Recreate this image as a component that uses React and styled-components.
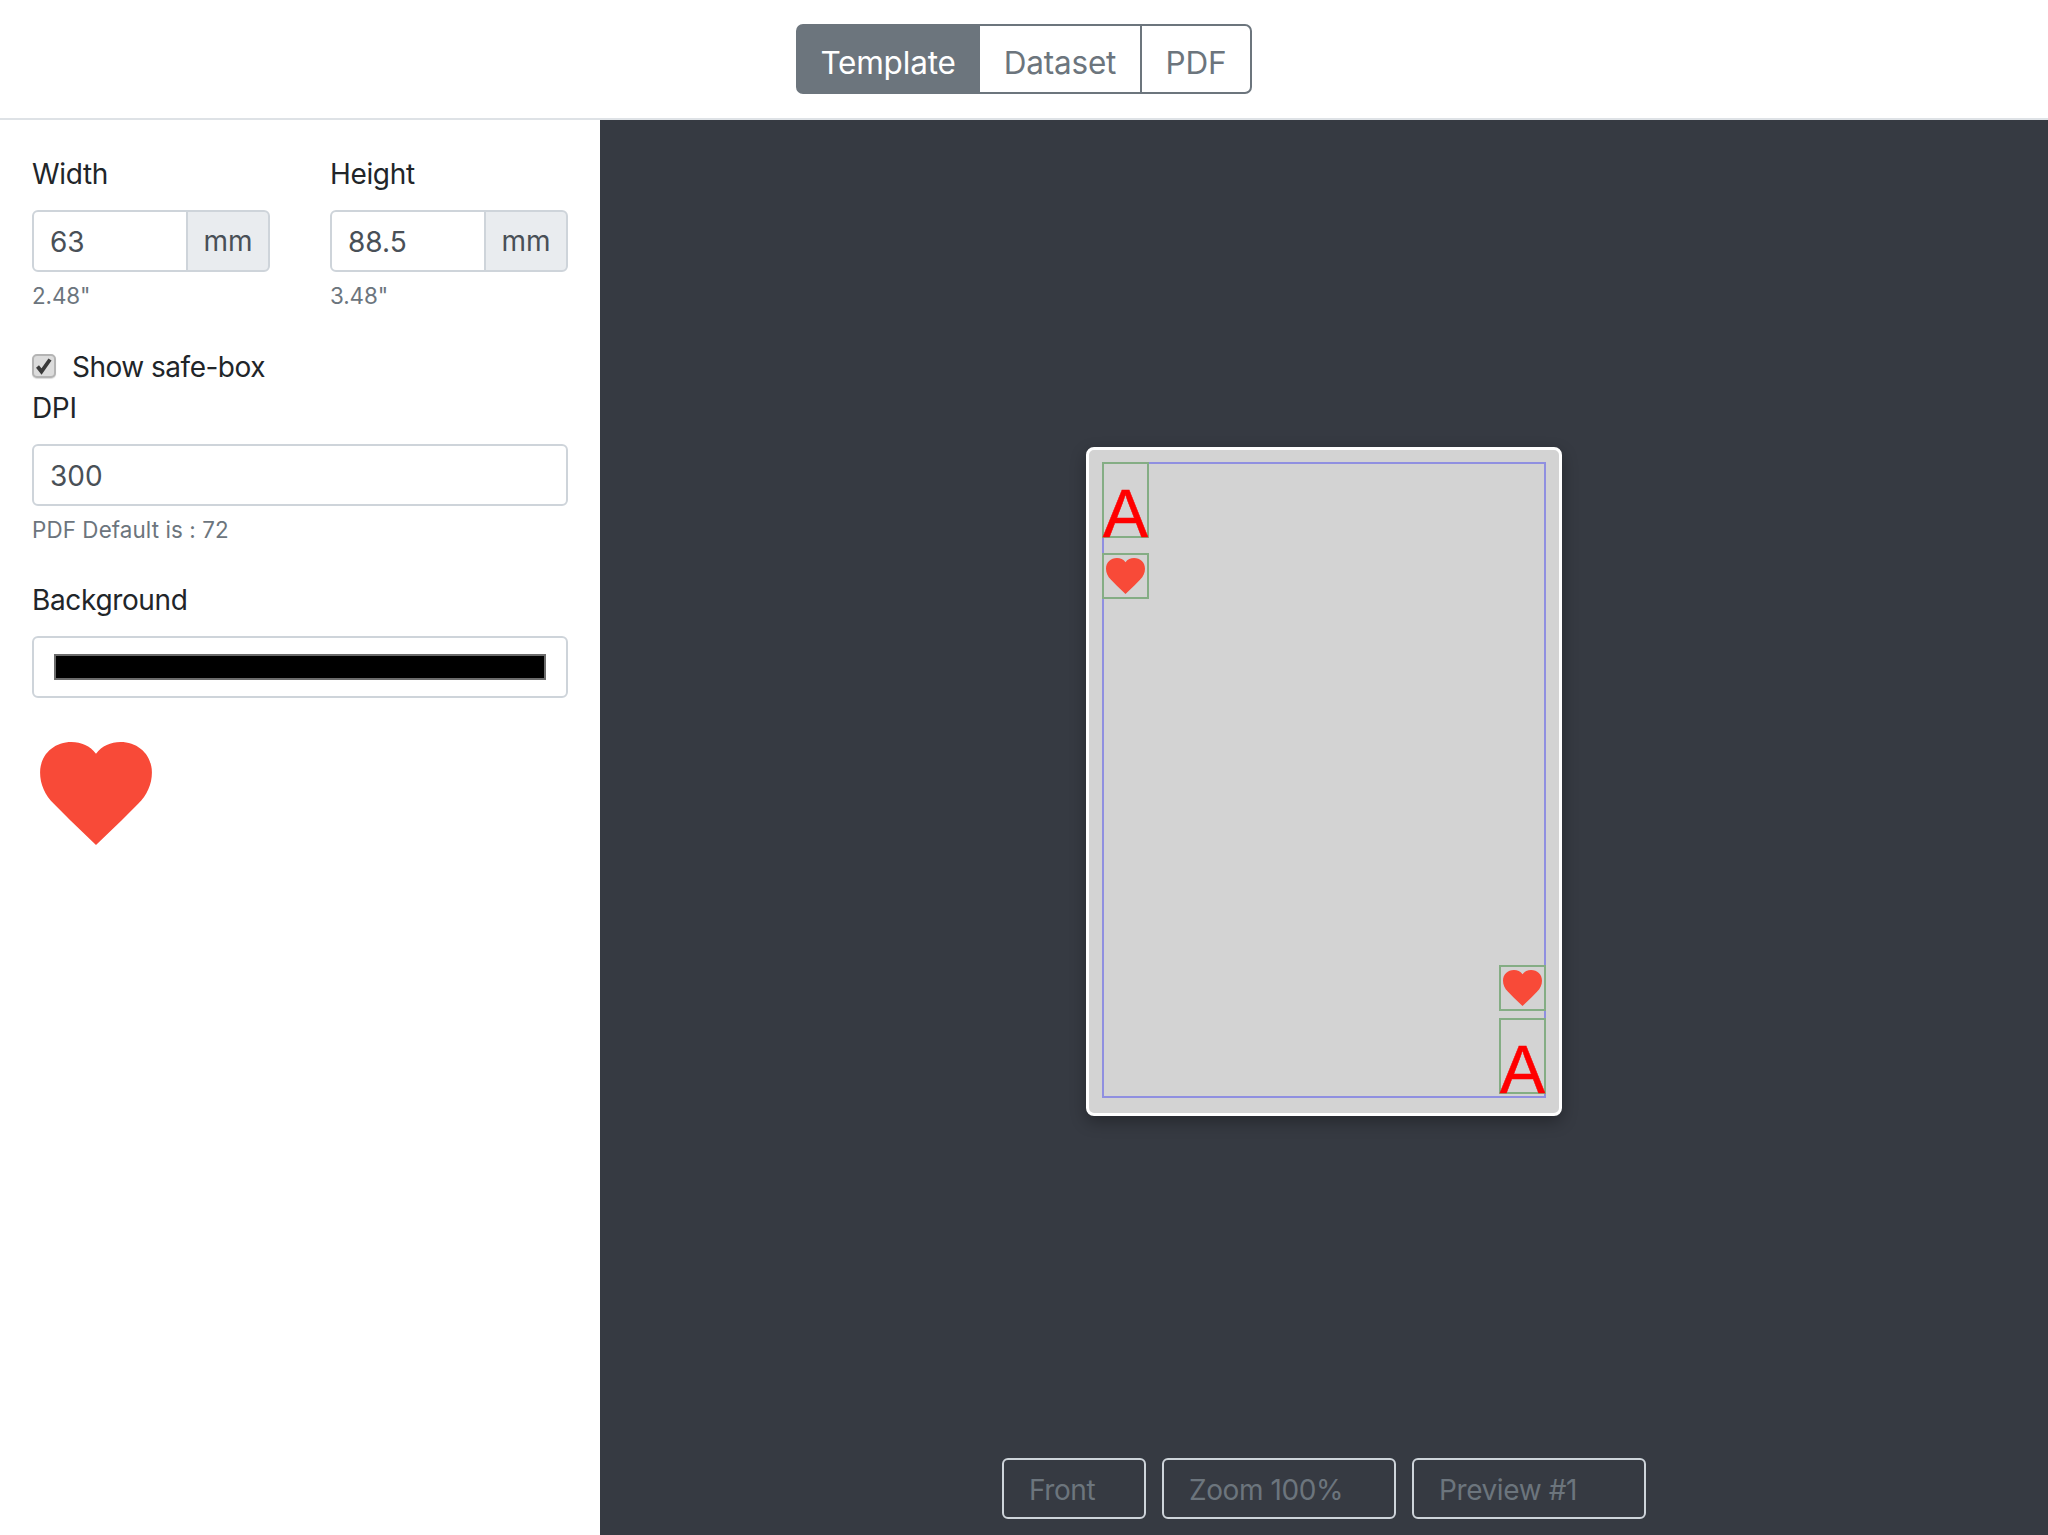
import React from 'react';
import styled, { createGlobalStyle } from 'styled-components';

const GlobalStyle = createGlobalStyle`
    html, body, #root {
        margin: 0;
        height: 100%;
    }
    body {
        font-family: Inter, "Open Sans", sans-serif;
        color: #212529;
        background: #fff;
    }
    * {
        box-sizing: border-box;
    }
`

const Page = styled.div`
    display: flex;
    flex-direction: column;
    height: 1535px;
    overflow: hidden;
`

const TopBar = styled.header`
    display: flex;
    justify-content: center;
    height: 120px;
    padding-top: 24px;
    border-bottom: 2px solid #dee2e6;
`

const TabGroup = styled.div`
    display: flex;
    height: 70px;
`

const Tab = styled.button`
    width: ${props => props.$width}px;
    margin-left: -2px;
    padding: 7px 0 0;
    font: inherit;
    font-size: 31.5px;
    letter-spacing: -0.2px;
    border: 2px solid #6c757d;
    background: ${props => props.$active ? '#6c757d' : '#fff'};
    color: ${props => props.$active ? '#fff' : '#6c757d'};

    &:first-child {
        margin-left: 0;
        border-radius: 7px 0 0 7px;
    }
    &:last-child {
        border-radius: 0 7px 7px 0;
    }
`

const Body = styled.div`
    display: flex;
    flex: 1;
    min-height: 0;
`

const Sidebar = styled.aside`
    width: 600px;
    padding: 36px 32px 0 32px;
    background: #fff;
`

const SizeRow = styled.div`
    display: grid;
    grid-template-columns: 238px 238px;
    column-gap: 60px;
`

const Label = styled.div`
    font-size: 28px;
    line-height: 36px;
    letter-spacing: -0.35px;
    margin-bottom: ${props => props.$gap || 18}px;
`

const InputGroup = styled.div`
    display: flex;
    height: 62px;
`

const TextInput = styled.input`
    display: block;
    flex: 1;
    min-width: 0;
    width: 100%;
    height: 62px;
    padding: 2px 16px 0;
    font: inherit;
    font-size: 28px;
    color: #495057;
    background: #fff;
    border: 2px solid #ced4da;
    border-radius: ${props => props.$joined ? '6px 0 0 6px' : '6px'};
    outline: none;
`

const Addon = styled.div`
    display: flex;
    align-items: center;
    justify-content: center;
    width: 84px;
    margin-left: -2px;
    font-size: 28px;
    color: #495057;
    background: #e9ecef;
    border: 2px solid #ced4da;
    border-radius: 0 6px 6px 0;
`

const Hint = styled.div`
    margin-top: 10px;
    font-size: 22.4px;
    line-height: 28px;
    letter-spacing: -0.1px;
    color: #6c757d;
`

const DpiHint = styled(Hint)`
    letter-spacing: 0.1px;
`

const CheckRow = styled.label`
    display: flex;
    align-items: center;
    height: 40px;
    margin-top: 37px;
    font-size: 28px;
    letter-spacing: -0.5px;
`

const CheckBox = styled.span`
    display: flex;
    align-items: center;
    justify-content: center;
    width: 24px;
    height: 24px;
    margin: -3px 16px 0 0;
    background: #dcdcdc;
    border: 2px solid #b4b4b4;
    border-radius: 5px;
    box-shadow: 0 1px 1px rgba(0, 0, 0, 0.15);
`

const DpiLabel = styled(Label)`
    margin-top: 3px;
`

const DpiInput = styled(TextInput)`
    margin-top: 1px;
`

const Section = styled.div`
    margin-top: ${props => props.$top}px;
`

const ColorField = styled.input`
    display: block;
    width: 100%;
    height: 62px;
    padding: 16px 20px;
    background: #fff;
    border: 2px solid #ced4da;
    border-radius: 6px;
    outline: none;
    -webkit-appearance: none;
    appearance: none;

    &::-webkit-color-swatch-wrapper {
        padding: 0;
    }
    &::-webkit-color-swatch {
        border: 2px solid #6b6b6b;
        border-radius: 0;
    }
`

const BigHeart = styled.svg`
    display: block;
    width: 112px;
    height: 103px;
    margin: 44px 0 0 8px;
    filter: blur(0.5px);
`

const Preview = styled.main`
    display: flex;
    flex-direction: column;
    flex: 1;
    background: #363a42;
`

const Stage = styled.div`
    display: flex;
    flex: 1;
    align-items: center;
    justify-content: center;
`

const Card = styled.div`
    position: relative;
    width: 476px;
    height: 669px;
    background: #d3d3d3;
    border: 3px solid #fff;
    border-radius: 8px;
    box-shadow: 0 6px 16px rgba(0, 0, 0, 0.3);
`

const SafeBox = styled.div`
    position: absolute;
    left: 13px;
    top: 12px;
    width: 444px;
    height: 636px;
    border: 2px solid #8f8fe0;
`

const Slot = styled.div`
    position: absolute;
    left: ${props => props.$left}px;
    top: ${props => props.$top}px;
    width: 47px;
    height: ${props => props.$height}px;
    border: 2px solid #84ad84;
`

const Letter = styled.span`
    position: absolute;
    left: -2px;
    right: -2px;
    bottom: -2px;
    font-family: "Liberation Sans", Arial, sans-serif;
    font-size: 68px;
    line-height: 49px;
    height: 49px;
    text-align: center;
    color: #ff0000;
    -webkit-text-stroke: 0.5px #ff0000;
`

const SlotHeart = styled.svg`
    display: block;
    width: 39px;
    height: 36px;
    margin: 3px 0 0 2px;
    filter: blur(0.4px);
`

const Footer = styled.footer`
    display: flex;
    justify-content: center;
    gap: 16px;
    height: 93px;
    padding-top: 16px;
`

const FooterField = styled.input`
    width: ${props => props.$width}px;
    height: 61px;
    padding: 2px 25px 0;
    font: inherit;
    font-size: 28px;
    letter-spacing: -0.4px;
    background: transparent;
    border: 2px solid #ced4da;
    border-radius: 6px;
    outline: none;

    &::placeholder {
        color: #6c757d;
        opacity: 1;
    }
`

const HEART_PATH = 'M57 105L31 80L14 63C5 54 0 43 0 31C0 13 14 0 32 0C42 0 51 4 57 12C63 4 72 0 82 0C100 0 114 13 114 31C114 43 109 54 100 63L83 80Z'

function Heart({ as: Svg }) {
    return (
        <Svg viewBox="0 0 114 105">
            <path d={HEART_PATH} fill="#f84a38" />
        </Svg>
    )
}

function App() {
    return (
        <Page>
            <GlobalStyle />
            <TopBar>
                <TabGroup>
                    <Tab $active $width={184}>Template</Tab>
                    <Tab $width={164}>Dataset</Tab>
                    <Tab $width={112}>PDF</Tab>
                </TabGroup>
            </TopBar>

            <Body>
                <Sidebar>
                    <SizeRow>
                        <div>
                            <Label>Width</Label>
                            <InputGroup>
                                <TextInput $joined defaultValue="63" />
                                <Addon>mm</Addon>
                            </InputGroup>
                            <Hint>2.48"</Hint>
                        </div>
                        <div>
                            <Label>Height</Label>
                            <InputGroup>
                                <TextInput $joined defaultValue="88.5" />
                                <Addon>mm</Addon>
                            </InputGroup>
                            <Hint>3.48"</Hint>
                        </div>
                    </SizeRow>

                    <CheckRow>
                        <CheckBox>
                            <svg width="18" height="18" viewBox="0 0 18 18">
                                <path d="M2.5 9.5L6.5 14.5L15 2.5" fill="none" stroke="#3a3a3a" strokeWidth="3.8" />
                            </svg>
                        </CheckBox>
                        Show safe-box
                    </CheckRow>

                    <DpiLabel>DPI</DpiLabel>
                    <DpiInput defaultValue="300" />
                    <DpiHint>PDF Default is : 72</DpiHint>

                    <Section $top={38}>
                        <Label>Background</Label>
                        <ColorField type="color" defaultValue="#000000" />
                    </Section>

                    <Heart as={BigHeart} />
                </Sidebar>

                <Preview>
                    <Stage>
                        <Card>
                            <SafeBox>
                                <Slot $left={-2} $top={-2} $height={76}>
                                    <Letter>A</Letter>
                                </Slot>
                                <Slot $left={-2} $top={89} $height={46}>
                                    <Heart as={SlotHeart} />
                                </Slot>
                                <Slot $left={395} $top={501} $height={46}>
                                    <Heart as={SlotHeart} />
                                </Slot>
                                <Slot $left={395} $top={554} $height={76}>
                                    <Letter>A</Letter>
                                </Slot>
                            </SafeBox>
                        </Card>
                    </Stage>
                    <Footer>
                        <FooterField $width={144} placeholder="Front" />
                        <FooterField $width={234} placeholder="Zoom 100%" />
                        <FooterField $width={234} placeholder="Preview #1" />
                    </Footer>
                </Preview>
            </Body>
        </Page>
    );
}

export default App;
